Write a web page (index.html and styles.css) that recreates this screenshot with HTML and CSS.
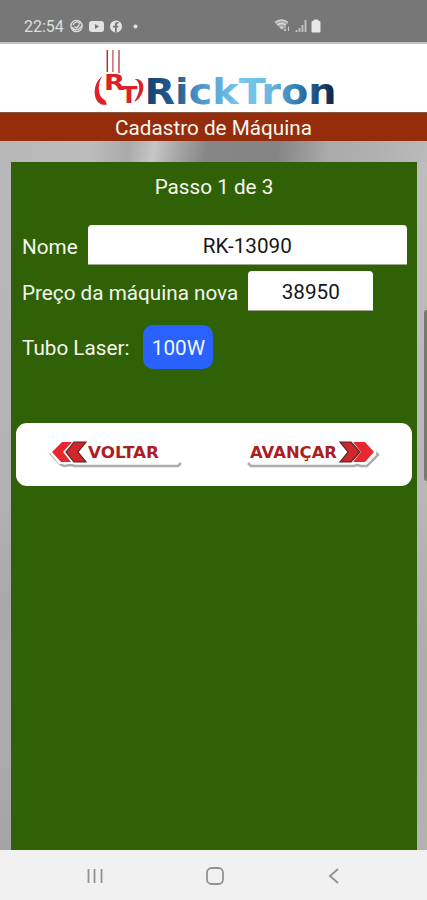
FILE: index.html
```html
<!DOCTYPE html>
<html lang="pt-BR">
<head>
  <meta charset="UTF-8">
  <meta name="viewport" content="width=device-width, initial-scale=1.0">
  <title>RickTron - Cadastro de Máquina</title>
  <link rel="stylesheet" href="styles.css">
</head>
<body>
<div class="app">
  <!-- Status bar -->
  <div class="status-bar">
    <span class="clock">22:54</span>
    <svg class="status-icons" width="72" height="16" viewBox="0 0 72 16">
      <g fill="none" stroke="#dedede" stroke-width="1.4">
        <circle cx="7.500" cy="8" r="5.600"/>
        <path d="M3.500 9c1 4 6 4 9-1M4 7c2-4 6-4 7-1M5.500 8.500l2 1.500 3-3.500"/>
      </g>
      <rect x="20" y="3" width="15" height="11" rx="3" fill="#e2e2e2"/>
      <path d="M26 6l4 2.500-4 2.500z" fill="#777"/>
      <circle cx="47" cy="8.500" r="6" fill="#e2e2e2"/>
      <path d="M46 14.500v-5h-2V7.700h2V6.500c0-2 1-2.700 3.500-2.500v1.600c-1.300 0-1.700.2-1.700 2.100h1.700l-.3 1.800h-1.400v5z" fill="#777"/>
      <circle cx="66.500" cy="8.500" r="2" fill="#e2e2e2"/>
    </svg>
    <svg class="signal-icons" width="48" height="16" viewBox="0 0 48 16">
      <path d="M1 5q6.500-5 13 0L8 12z" fill="#aaa"/>
      <path d="M1 4.500q6.500-5 13 0M3.500 7q4-3 8 0M6 9.500h3" fill="none" stroke="#ddd" stroke-width="1.300"/>
      <path d="M11 8v5m-1.500-1.500L11 13l1.500-1.500M14.500 13V8.500" fill="none" stroke="#ccc" stroke-width="1"/>
      <path d="M22.500 14v-2M25.500 14v-4M28.500 14V7M31.500 14V2" stroke="#c4c4c4" stroke-width="1.800"/>
      <path d="M40 2h4v1.500h2V14h-8V3.500h2z" fill="#e6e6e6" stroke="#e6e6e6"/>
    </svg>
  </div>

  <!-- Logo -->
  <div class="header">
    <svg class="logo" width="300" height="68" viewBox="92 44 300 68">
      <defs>
        <linearGradient id="brand" gradientUnits="userSpaceOnUse" x1="147" y1="0" x2="334" y2="0">
          <stop offset="0" stop-color="#154474"/>
          <stop offset=".17" stop-color="#285f91"/>
          <stop offset=".27" stop-color="#4a92cb"/>
          <stop offset=".5" stop-color="#79c9ec"/>
          <stop offset=".66" stop-color="#69b8df"/>
          <stop offset=".8" stop-color="#347fb5"/>
          <stop offset="1" stop-color="#0c2449"/>
        </linearGradient>
      </defs>
      <g stroke-width="1.500">
        <path d="M107.300 50v22" stroke="#b52f35"/>
        <path d="M112.900 50v22" stroke="#c9696b"/>
        <path d="M119 50v23" stroke="#bf5055"/>
      </g>
      <path d="M102 76.500C94 82 92 97 99 103c2.500 2 5.500 2 8 1.500-1-2-1-4-3-5-6-3-7-15-2-23z" fill="#e01f27"/>
      <path d="M134.500 79c9-1 10.500 8 7.500 14.500-2 4.500-5 7-8 8.500 4-6 6-12 5-17-.5-3-2-5-4.500-6z" fill="#d8232b"/>
      <text class="emblem" x="104" y="89.500" textLength="21" lengthAdjust="spacingAndGlyphs">R</text>
      <text class="emblem emblem-t" x="120.500" y="102.500" textLength="17" lengthAdjust="spacingAndGlyphs">T</text>
      <text class="brand" x="144.500" y="104" textLength="192" lengthAdjust="spacingAndGlyphs" fill="url(#brand)">RickTron</text>
    </svg>
  </div>

  <div class="title">Cadastro de Máquina</div>

  <!-- Form -->
  <div class="main">
    <div class="panel">
      <div class="step">Passo 1 de 3</div>
      <div class="row">
        <label for="nome">Nome</label>
        <input type="text" id="nome" class="input-name" value="RK-13090">
      </div>
      <div class="row">
        <label for="preco">Preço da máquina nova</label>
        <input type="text" id="preco" class="input-price" value="38950">
      </div>
      <div class="row row-tube">
        <span>Tubo Laser:</span>
        <button class="tube">100W</button>
      </div>
      <div class="nav-box">
        <svg width="134" height="32" viewBox="0 0 134 32">
          <path d="M2 14l10 11 4 2 7-1 4 1h103l3-3" fill="none" stroke="#acacac" stroke-width="2.500"/>
          <path d="M1 13L14 1h26v21h91l-2 3H25l-5-2-4 2h-5z" fill="#fff"/>
          <path d="M14 3h10L15 13l8 10H13L4 13z" fill="#e9272e"/>
          <path d="M26 3h12L30 13l8 10H26L18 13z" fill="#ce282d" stroke="#572126" stroke-width="1.200"/>
          <text class="nav-label" x="40" y="19" textLength="71" lengthAdjust="spacingAndGlyphs">VOLTAR</text>
        </svg>
        <svg width="134" height="32" viewBox="0 0 134 32">
          <path d="M2 24l3 3h103l3-1 4 1h6l11-11-3-4" fill="none" stroke="#acacac" stroke-width="2.500"/>
          <path d="M3 22h89V1h27l12 12-10 12h-6l-5-2-5 2H5z" fill="#fff"/>
          <path d="M107 3h12l9 10-9 10h-12l8-10z" fill="#e9272e"/>
          <path d="M94 3h11l9 10-9 10H94l8-10z" fill="#ce282d" stroke="#572126" stroke-width="1.200"/>
          <text class="nav-label" x="4" y="19" textLength="87" lengthAdjust="spacingAndGlyphs">AVANÇAR</text>
        </svg>
      </div>
    </div>
    <div class="scrollbar"></div>
  </div>

  <!-- Android navigation -->
  <div class="android-nav">
    <svg width="20" height="20" viewBox="0 0 20 20"><path d="M3.500 3v14M9.500 3v14M16.500 3v14"/></svg>
    <svg width="20" height="20" viewBox="0 0 20 20"><rect x="2" y="2" width="16" height="16" rx="4.500"/></svg>
    <svg width="20" height="20" viewBox="0 0 20 20"><path d="M14 3L6 10l8 7"/></svg>
  </div>
</div>
</body>
</html>
```
FILE: styles.css
```css
* { margin: 0; padding: 0; box-sizing: border-box; font-family: Roboto, sans-serif; }
body { overflow: hidden; }

.app {
  display: flex;
  flex-direction: column;
  height: 100vh;
  font-size: 20.7px;
  color: #f4f7ee;
}

/* Status bar */
.status-bar {
  display: flex;
  align-items: center;
  height: 44px;
  padding: 10px 0 0 24px;
  background: #777;
  border-bottom: 2px solid #c4c4c4;
}
.clock {
  width: 45px;
  font-size: 16px;
  color: #dedede;
}
.signal-icons {
  margin-left: 133px;
}

/* Header */
.header {
  height: 68px;
  padding-left: 92px;
  background: #fff;
}
.logo {
  display: block;
  overflow: visible;
}
.brand {
  font-family: "DejaVu Sans", sans-serif;
  font-size: 36px;
  font-weight: bold;
}
.emblem {
  font-family: "DejaVu Sans", sans-serif;
  font-size: 21px;
  font-weight: bold;
  fill: #dd2027;
}
.emblem-t {
  font-size: 23px;
}
.title {
  height: 29px;
  line-height: 30px;
  text-align: center;
  background: #952d0c;
  border-top: 1px solid #87563f;
}

/* Form */
.main {
  position: relative;
  flex: 1;
  padding: 21px 10px 0 11px;
  background:
    linear-gradient(100deg, #b7b7b7 0, #bcbcbc 90px, #aaa 128px, #c6c6c6 153px, #aaa 174px, #868686 205px, #858585 275px, #aaa 325px, #b0b0b0 370px, #bbb 427px) 0 0 / 100% 21px no-repeat,
    linear-gradient(172deg, #b9b9b9 0%, #b3b3b3 45%, #a9a9a9 62%, #acacac 80%, #a2a2a2 100%) 0 0 / 50% 100% no-repeat,
    linear-gradient(172deg, #bebebe 0%, #b9b9b9 50%, #adadad 75%, #b3b3b3 100%);
}
.panel {
  height: 100%;
  padding: 12px 5px 0;
  background: #316106;
}
.step {
  height: 51px;
  line-height: 27px;
  text-align: center;
}
.row {
  display: flex;
  align-items: center;
  gap: 10px;
  height: 40px;
  margin-bottom: 6px;
  padding: 0 5px 0 6px;
}
.row label {
  padding-top: 3px;
}
input {
  height: 40px;
  padding-top: 3px;
  border: 0;
  border-bottom: 1px solid #9daa91;
  border-radius: 4px 4px 0 0;
  background: #fff;
  color: #171717;
  font-size: 20.7px;
  text-align: center;
}
.input-name {
  flex: 1;
  min-width: 0;
}
.input-price {
  width: 125px;
}
.row-tube {
  gap: 14px;
  height: 44px;
  margin-top: 14px;
}
.row-tube span {
  padding-top: 2px;
}
.tube {
  width: 70px;
  height: 44px;
  padding-top: 2px;
  border: 0;
  border-radius: 10px;
  background: #2962ff;
  color: #f4f7ff;
  font-size: 20.7px;
}
.nav-box {
  display: flex;
  justify-content: space-between;
  align-items: center;
  height: 63px;
  margin-top: 54px;
  padding: 0 32px;
  background: #fff;
  border-radius: 11px;
}
.nav-label {
  font-family: "DejaVu Sans", sans-serif;
  font-size: 15px;
  font-weight: bold;
  fill: #aa1e24;
}
.scrollbar {
  position: absolute;
  top: 169px;
  right: 0;
  width: 3px;
  height: 171px;
  border-radius: 3px 0 0 3px;
  background: #777;
}

/* Android navigation */
.android-nav {
  display: flex;
  justify-content: space-between;
  height: 50px;
  padding: 16px 83px 0 85px;
  background: #f1f1f1;
}
.android-nav svg {
  fill: none;
  stroke: #929292;
  stroke-width: 1.8;
}
```
